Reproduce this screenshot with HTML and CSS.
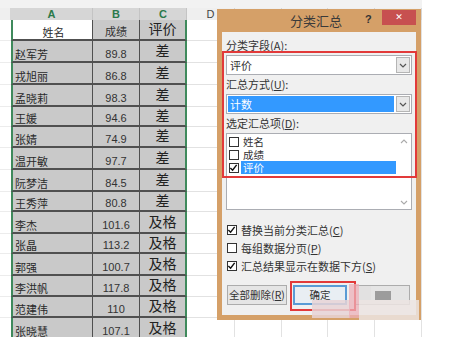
FILE: index.html
```html
<!DOCTYPE html>
<html lang="zh-CN">
<head>
  <meta charset="UTF-8">
  <title>分类汇总</title>
  <link rel="stylesheet" href="styles.css">
</head>
<body>
  <div class="sheet">
    <div class="topbar"></div>
    <div class="row head">
      <div class="w-stub"></div>
      <div class="w-a on">A</div>
      <div class="w-b on">B</div>
      <div class="w-c on">C</div>
      <div class="w-d">D</div>
      <div class="w-e"></div>
      <div class="w-f"></div>
      <div class="w-g"></div>
      <div class="w-h"></div>
    </div>

    <div class="row h21">
      <div class="w-stub stub"></div>
      <div class="w-a ca first"><span class="name title-cell">姓名</span></div>
      <div class="w-b cb"><span class="num">成绩</span></div>
      <div class="w-c cc"><span class="grade">评价</span></div>
      <div class="w-d blank"></div><div class="w-e blank"></div><div class="w-f blank"></div><div class="w-g blank"></div><div class="w-h blank"></div>
    </div>
    <div class="row h22">
      <div class="w-stub stub"></div>
      <div class="w-a ca"><span class="name">赵军芳</span></div>
      <div class="w-b cb"><span class="num">89.8</span></div>
      <div class="w-c cc"><span class="grade">差</span></div>
      <div class="w-d blank"></div><div class="w-e blank"></div><div class="w-f blank"></div><div class="w-g blank"></div><div class="w-h blank"></div>
    </div>
    <div class="row h22">
      <div class="w-stub stub"></div>
      <div class="w-a ca"><span class="name">戎旭丽</span></div>
      <div class="w-b cb"><span class="num">86.8</span></div>
      <div class="w-c cc"><span class="grade">差</span></div>
      <div class="w-d blank"></div><div class="w-e blank"></div><div class="w-f blank"></div><div class="w-g blank"></div><div class="w-h blank"></div>
    </div>
    <div class="row h22">
      <div class="w-stub stub"></div>
      <div class="w-a ca"><span class="name">孟晓莉</span></div>
      <div class="w-b cb"><span class="num">98.3</span></div>
      <div class="w-c cc"><span class="grade">差</span></div>
      <div class="w-d blank"></div><div class="w-e blank"></div><div class="w-f blank"></div><div class="w-g blank"></div><div class="w-h blank"></div>
    </div>
    <div class="row h20">
      <div class="w-stub stub"></div>
      <div class="w-a ca"><span class="name">王媛</span></div>
      <div class="w-b cb"><span class="num">94.6</span></div>
      <div class="w-c cc"><span class="grade">差</span></div>
      <div class="w-d blank"></div><div class="w-e blank"></div><div class="w-f blank"></div><div class="w-g blank"></div><div class="w-h blank"></div>
    </div>
    <div class="row h21">
      <div class="w-stub stub"></div>
      <div class="w-a ca"><span class="name">张婧</span></div>
      <div class="w-b cb"><span class="num">74.9</span></div>
      <div class="w-c cc"><span class="grade">差</span></div>
      <div class="w-d blank"></div><div class="w-e blank"></div><div class="w-f blank"></div><div class="w-g blank"></div><div class="w-h blank"></div>
    </div>
    <div class="row h22">
      <div class="w-stub stub"></div>
      <div class="w-a ca"><span class="name">温开敏</span></div>
      <div class="w-b cb"><span class="num">97.7</span></div>
      <div class="w-c cc"><span class="grade">差</span></div>
      <div class="w-d blank"></div><div class="w-e blank"></div><div class="w-f blank"></div><div class="w-g blank"></div><div class="w-h blank"></div>
    </div>
    <div class="row h22">
      <div class="w-stub stub"></div>
      <div class="w-a ca"><span class="name">阮梦洁</span></div>
      <div class="w-b cb"><span class="num">84.5</span></div>
      <div class="w-c cc"><span class="grade">差</span></div>
      <div class="w-d blank"></div><div class="w-e blank"></div><div class="w-f blank"></div><div class="w-g blank"></div><div class="w-h blank"></div>
    </div>
    <div class="row h20">
      <div class="w-stub stub"></div>
      <div class="w-a ca"><span class="name">王秀萍</span></div>
      <div class="w-b cb"><span class="num">80.8</span></div>
      <div class="w-c cc"><span class="grade">差</span></div>
      <div class="w-d blank"></div><div class="w-e blank"></div><div class="w-f blank"></div><div class="w-g blank"></div><div class="w-h blank"></div>
    </div>
    <div class="row h22">
      <div class="w-stub stub"></div>
      <div class="w-a ca"><span class="name">李杰</span></div>
      <div class="w-b cb"><span class="num">101.6</span></div>
      <div class="w-c cc"><span class="grade">及格</span></div>
      <div class="w-d blank"></div><div class="w-e blank"></div><div class="w-f blank"></div><div class="w-g blank"></div><div class="w-h blank"></div>
    </div>
    <div class="row h20">
      <div class="w-stub stub"></div>
      <div class="w-a ca"><span class="name">张晶</span></div>
      <div class="w-b cb"><span class="num">113.2</span></div>
      <div class="w-c cc"><span class="grade">及格</span></div>
      <div class="w-d blank"></div><div class="w-e blank"></div><div class="w-f blank"></div><div class="w-g blank"></div><div class="w-h blank"></div>
    </div>
    <div class="row h22">
      <div class="w-stub stub"></div>
      <div class="w-a ca"><span class="name">郭强</span></div>
      <div class="w-b cb"><span class="num">100.7</span></div>
      <div class="w-c cc"><span class="grade">及格</span></div>
      <div class="w-d blank"></div><div class="w-e blank"></div><div class="w-f blank"></div><div class="w-g blank"></div><div class="w-h blank"></div>
    </div>
    <div class="row h21">
      <div class="w-stub stub"></div>
      <div class="w-a ca"><span class="name">李洪帆</span></div>
      <div class="w-b cb"><span class="num">117.8</span></div>
      <div class="w-c cc"><span class="grade">及格</span></div>
      <div class="w-d blank"></div><div class="w-e blank"></div><div class="w-f blank"></div><div class="w-g blank"></div><div class="w-h blank"></div>
    </div>
    <div class="row h21">
      <div class="w-stub stub"></div>
      <div class="w-a ca"><span class="name">范建伟</span></div>
      <div class="w-b cb"><span class="num">110</span></div>
      <div class="w-c cc"><span class="grade">及格</span></div>
      <div class="w-d blank"></div><div class="w-e blank"></div><div class="w-f blank"></div><div class="w-g blank"></div><div class="w-h blank"></div>
    </div>
    <div class="row h22">
      <div class="w-stub stub"></div>
      <div class="w-a ca"><span class="name">张晓慧</span></div>
      <div class="w-b cb"><span class="num">107.1</span></div>
      <div class="w-c cc"><span class="grade">及格</span></div>
      <div class="w-d blank"></div><div class="w-e blank"></div><div class="w-f blank"></div><div class="w-g blank"></div><div class="w-h blank"></div>
    </div>
  </div>

  <!-- 分类汇总对话框 -->
  <div class="dialog">
    <div class="titlebar">
      <span class="title">分类汇总</span>
      <span class="help">?</span>
      <span class="close">&#x2715;</span>
    </div>
    <div class="panel">
      <div class="label">分类字段(<u>A</u>):</div>
      <div class="combo">
        <span class="combo-text">评价</span>
        <span class="combo-btn"><svg width="8" height="5" viewBox="0 0 8 5"><path d="M1 1 L4 4 L7 1" fill="none" stroke="#555" stroke-width="1.2"/></svg></span>
      </div>
      <div class="label">汇总方式(<u>U</u>):</div>
      <div class="combo">
        <span class="combo-text chosen">计数</span>
        <span class="combo-btn"><svg width="8" height="5" viewBox="0 0 8 5"><path d="M1 1 L4 4 L7 1" fill="none" stroke="#555" stroke-width="1.2"/></svg></span>
      </div>
      <div class="label">选定汇总项(<u>D</u>):</div>
      <div class="listbox">
        <div class="items">
          <div class="item"><i class="box"></i><span class="item-text">姓名</span></div>
          <div class="item"><i class="box"></i><span class="item-text">成绩</span></div>
          <div class="item"><i class="box checked"><svg width="10" height="10" viewBox="0 0 10 10"><path d="M1.5 5 L4 7.5 L8.5 1.5" fill="none" stroke="#111" stroke-width="1.6"/></svg></i><span class="item-text picked">评价</span></div>
        </div>
        <div class="scroll">
          <svg width="8" height="5" viewBox="0 0 8 5"><path d="M1 4 L4 1 L7 4" fill="none" stroke="#aaa" stroke-width="1.1"/></svg>
          <svg width="8" height="5" viewBox="0 0 8 5"><path d="M1 1 L4 4 L7 1" fill="none" stroke="#aaa" stroke-width="1.1"/></svg>
        </div>
      </div>
      <div class="options">
        <div class="opt"><i class="box checked"><svg width="10" height="10" viewBox="0 0 10 10"><path d="M1.5 5 L4 7.5 L8.5 1.5" fill="none" stroke="#111" stroke-width="1.6"/></svg></i>替换当前分类汇总(<u>C</u>)</div>
        <div class="opt"><i class="box"></i>每组数据分页(<u>P</u>)</div>
        <div class="opt"><i class="box checked"><svg width="10" height="10" viewBox="0 0 10 10"><path d="M1.5 5 L4 7.5 L8.5 1.5" fill="none" stroke="#111" stroke-width="1.6"/></svg></i>汇总结果显示在数据下方(<u>S</u>)</div>
      </div>
      <div class="buttons">
        <button class="btn wide">全部删除(<u>R</u>)</button>
        <button class="btn ok">确定</button>
        <button class="btn cancel"><span class="blurred"></span></button>
      </div>
      <!-- 红色标注框 -->
      <div class="mark mark-fields"></div>
      <div class="mark mark-ok"></div>
    </div>
  </div>

  <!-- 水印马赛克 -->
  <div class="mosaic">
    <span class="m1"></span>
    <span class="m2"></span>
    <span class="m3"></span>
    <span class="m4"></span>
  </div>
</body>
</html>
```

FILE: styles.css
```css
* {
  margin: 0;
  padding: 0;
  box-sizing: border-box;
}
body {
  width: 457px;
  height: 337px;
  overflow: hidden;
  position: relative;
  background: #fff;
  font-family: "Noto Sans CJK SC", "Liberation Sans", sans-serif;
  color: #2a2a2a;
}

/* 表格区域 */
.sheet {
  width: 422px;
}
.topbar {
  height: 8px;
  background: #f2f2f2;
}
.row {
  display: flex;
}
.row > div {
  flex: none;
}
.w-stub { width: 11px; }
.w-a { width: 82px; }
.w-b { width: 47px; }
.w-c { width: 47px; }
.w-d { width: 48px; }
.w-e { width: 47px; }
.w-f { width: 46px; }
.w-g { width: 47px; }
.w-h { width: 47px; }

.h20 { height: 20px; }
.h21 { height: 21px; }
.h22 { height: 22px; }

.head {
  height: 12px;
  background: #efefef;
  font: 11px/12px "Liberation Sans", sans-serif;
}
.head > div {
  text-align: center;
  color: #444;
  border-right: 1px solid #d6d6d6;
}
.head .on {
  background: #d6d6d6;
  color: #2b7a4b;
  font-weight: bold;
  border-right-color: #c4c4c4;
}

.stub {
  border-bottom: 1px solid #ececec;
}
.blank {
  border-bottom: 1px solid #e2e2e2;
  border-right: 1px solid #e2e2e2;
}
.ca, .cb, .cc {
  display: flex;
  background: #c9c9c9;
  border-bottom: 2px solid #505050;
}
.ca {
  align-items: flex-end;
  border-left: 2px solid #3f8a5c;
  border-right: 1px solid #505050;
  padding-left: 2px;
}
.ca.first {
  background: #fff;
  justify-content: center;
}
.cb {
  align-items: flex-end;
  justify-content: center;
  border-right: 1px solid #505050;
}
.cc {
  align-items: center;
  justify-content: center;
  border-right: 2px solid #3f8a5c;
  padding-bottom: 3px;
}
.name {
  font-size: 11px;
  line-height: 13px;
}
.num {
  font: 11px/13px "Liberation Sans", "Noto Sans CJK SC", sans-serif;
  color: #333;
}
.grade {
  font-size: 14px;
  line-height: 16px;
  color: #222;
}

/* 对话框 */
.dialog {
  position: absolute;
  left: 217px;
  top: 9px;
  width: 204px;
  height: 311px;
  background: #d5a068;
  font-size: 11px;
  color: #333;
}
.titlebar {
  height: 23px;
  display: flex;
  align-items: flex-start;
}
.title {
  flex: 1;
  text-align: center;
  padding-left: 50px;
  font-size: 13px;
  line-height: 23px;
  color: #3a3a3a;
}
.help {
  width: 12px;
  margin-top: 4px;
  margin-right: 5px;
  font: bold 11px/12px "Liberation Sans", sans-serif;
  color: #333;
}
.close {
  width: 34px;
  height: 15px;
  margin-top: 1px;
  margin-right: 5px;
  background: #c75050;
  color: #fff;
  font: bold 9px/15px "DejaVu Sans", sans-serif;
  text-align: center;
}
.panel {
  position: relative;
  height: 283px;
  margin: 0 5px;
  padding: 0 4px;
  background: #f0f0f0;
  display: flex;
  flex-direction: column;
}
.label {
  height: 13px;
  line-height: 13px;
  margin-top: 3px;
}
.label:first-child {
  margin-top: 7px;
}
.combo {
  height: 20px;
  margin-top: 3px;
  display: flex;
  align-items: center;
  padding: 1px;
  background: #fff;
  border: 1px solid #abadb3;
}
.combo-text {
  flex: 1;
  height: 16px;
  line-height: 16px;
  padding-left: 2px;
}
.combo-text.chosen {
  background: #3399ff;
  color: #fff;
}
.combo-btn {
  width: 14px;
  height: 16px;
  margin-left: 2px;
  display: flex;
  align-items: center;
  justify-content: center;
  background: #e8e8e8;
  border: 1px solid #b5b5b5;
}
.listbox {
  height: 77px;
  margin-top: 3px;
  display: flex;
  background: #fff;
  border: 1px solid #abadb3;
}
.items {
  flex: 1;
  padding: 1px 0 0 2px;
}
.item {
  height: 13px;
  display: flex;
  align-items: center;
  overflow: hidden;
}
.item-text {
  flex: 1;
  height: 13px;
  font-size: 10.5px;
  line-height: 13px;
  padding-left: 2px;
}
.item-text.picked {
  background: #3399ff;
  color: #fff;
}
.scroll {
  width: 15px;
  display: flex;
  flex-direction: column;
  justify-content: space-between;
  align-items: center;
  padding: 5px 0 4px;
}
.box {
  flex: none;
  width: 10px;
  height: 10px;
  display: inline-flex;
  background: #fff;
  border: 1px solid #333;
  margin-right: 2px;
}
.box svg {
  margin: -1px 0 0 -1px;
}
.options {
  margin-top: 11px;
}
.opt {
  height: 18px;
  display: flex;
  align-items: center;
  padding-left: 1px;
  white-space: nowrap;
}
.opt .box {
  margin-right: 4px;
}
.buttons {
  margin-top: 10px;
  display: flex;
  gap: 6px;
  padding-left: 1px;
}
.btn {
  height: 20px;
  padding: 0;
  white-space: nowrap;
  font: 10.5px/18px "Noto Sans CJK SC", sans-serif;
  color: #333;
  background: #e5e5e5;
  border: 1px solid #acacac;
}
.btn.wide {
  width: 60px;
}
.btn.ok {
  width: 54px;
  background: #e9eef3;
  border: 2px solid #5a9bd5;
  line-height: 16px;
}
.btn.cancel {
  width: 55px;
  margin-left: 2px;
  display: flex;
  align-items: center;
  justify-content: center;
}
.blurred {
  width: 16px;
  height: 9px;
  background: #9c9c9c;
}
.mark {
  position: absolute;
  border: 2px solid #e23a3a;
}
.mark-fields {
  left: 0;
  top: 19px;
  width: 195px;
  height: 127px;
}
.mark-ok {
  left: 68px;
  top: 249px;
  width: 66px;
  height: 30px;
}

/* 水印 */
.mosaic span {
  position: absolute;
  display: block;
}
.mosaic .m1 {
  left: 312px; top: 300px; width: 38px; height: 18px;
  background: rgba(232, 212, 214, 0.85);
}
.mosaic .m2 {
  left: 349px; top: 284px; width: 10px; height: 34px;
  background: rgba(236, 176, 184, 0.75);
}
.mosaic .m3 {
  left: 359px; top: 300px; width: 60px; height: 20px;
  background: rgba(236, 228, 226, 0.85);
}
.mosaic .m4 {
  left: 359px; top: 286px; width: 12px; height: 14px;
  background: rgba(226, 224, 224, 0.85);
}
```
